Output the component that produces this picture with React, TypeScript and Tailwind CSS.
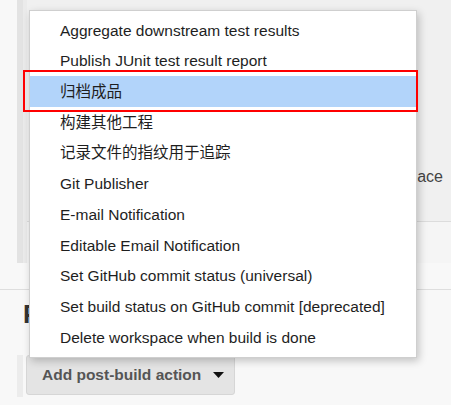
import React from 'react';

const menuItems = [
  'Aggregate downstream test results',
  'Publish JUnit test result report',
  '归档成品',
  '构建其他工程',
  '记录文件的指纹用于追踪',
  'Git Publisher',
  'E-mail Notification',
  'Editable Email Notification',
  'Set GitHub commit status (universal)',
  'Set build status on GitHub commit [deprecated]',
  'Delete workspace when build is done',
];

const App: React.FC = () => {
  const selected = 2;

  return (
    <div
      className="relative w-[451px] h-[405px] overflow-hidden bg-[#f8f8f8]"
      style={{ fontFamily: '"Liberation Sans", "Noto Sans CJK SC", sans-serif' }}
    >
      {/* config section behind the menu */}
      <div className="flex h-[263px] pl-[17px]">
        <div className="w-[6px] bg-[#e3e3e3]" />
        <div className="w-[4px] bg-[#ebebeb]" />
        <div className="flex flex-1 flex-col">
          <div className="flex h-[222px] items-end justify-end border-b border-[#dcdcdc] bg-[#f0f0f0] pb-[35px] pr-[8px]">
            <span className="text-[16px] leading-[18px] text-[#444]">Delete workspace</span>
          </div>
          <div className="flex-1 bg-[#f5f5f5]" />
        </div>
      </div>
      <div className="h-[27px] border-b border-[#dedede]" />

      <div className="pl-[23px] pt-[11px]">
        <h2 className="text-[26px] font-bold leading-[26px] text-[#333]">Post-build Actions</h2>
      </div>

      <div className="mt-[28px] flex pl-[17px]">
        <div className="h-[42px] w-[6px] bg-[#ececec]" />
        <button className="ml-[3px] flex h-[40px] w-[209px] items-center gap-[12px] rounded-[3px] border border-[#d6d6d6] bg-[#e4e4e4] pl-[15px] text-[15.5px] font-bold text-[#555]">
          Add post-build action
          <svg width="11" height="6" viewBox="0 0 11 6">
            <path d="M0 0 L11 0 L5.5 6 Z" fill="#111" />
          </svg>
        </button>
      </div>

      {/* dropdown menu */}
      <div className="absolute left-[29px] top-[10px] h-[348px] w-[388px] border border-[#cfcfcf] bg-white py-[4px] shadow-[2px_3px_8px_rgba(0,0,0,0.22)]">
        {menuItems.map((item, i) => (
          <div
            key={item}
            className={`flex h-[30.7px] items-center pl-[30px] text-[15.5px] text-[#1e1e1e] ${
              i === selected ? 'bg-[#b2d4fa]' : ''
            }`}
          >
            {item}
          </div>
        ))}
      </div>

      {/* annotation */}
      <div className="absolute left-[23px] top-[70px] h-[42px] w-[395px] border-2 border-[#ff0000]" />
    </div>
  );
};

export default App;
